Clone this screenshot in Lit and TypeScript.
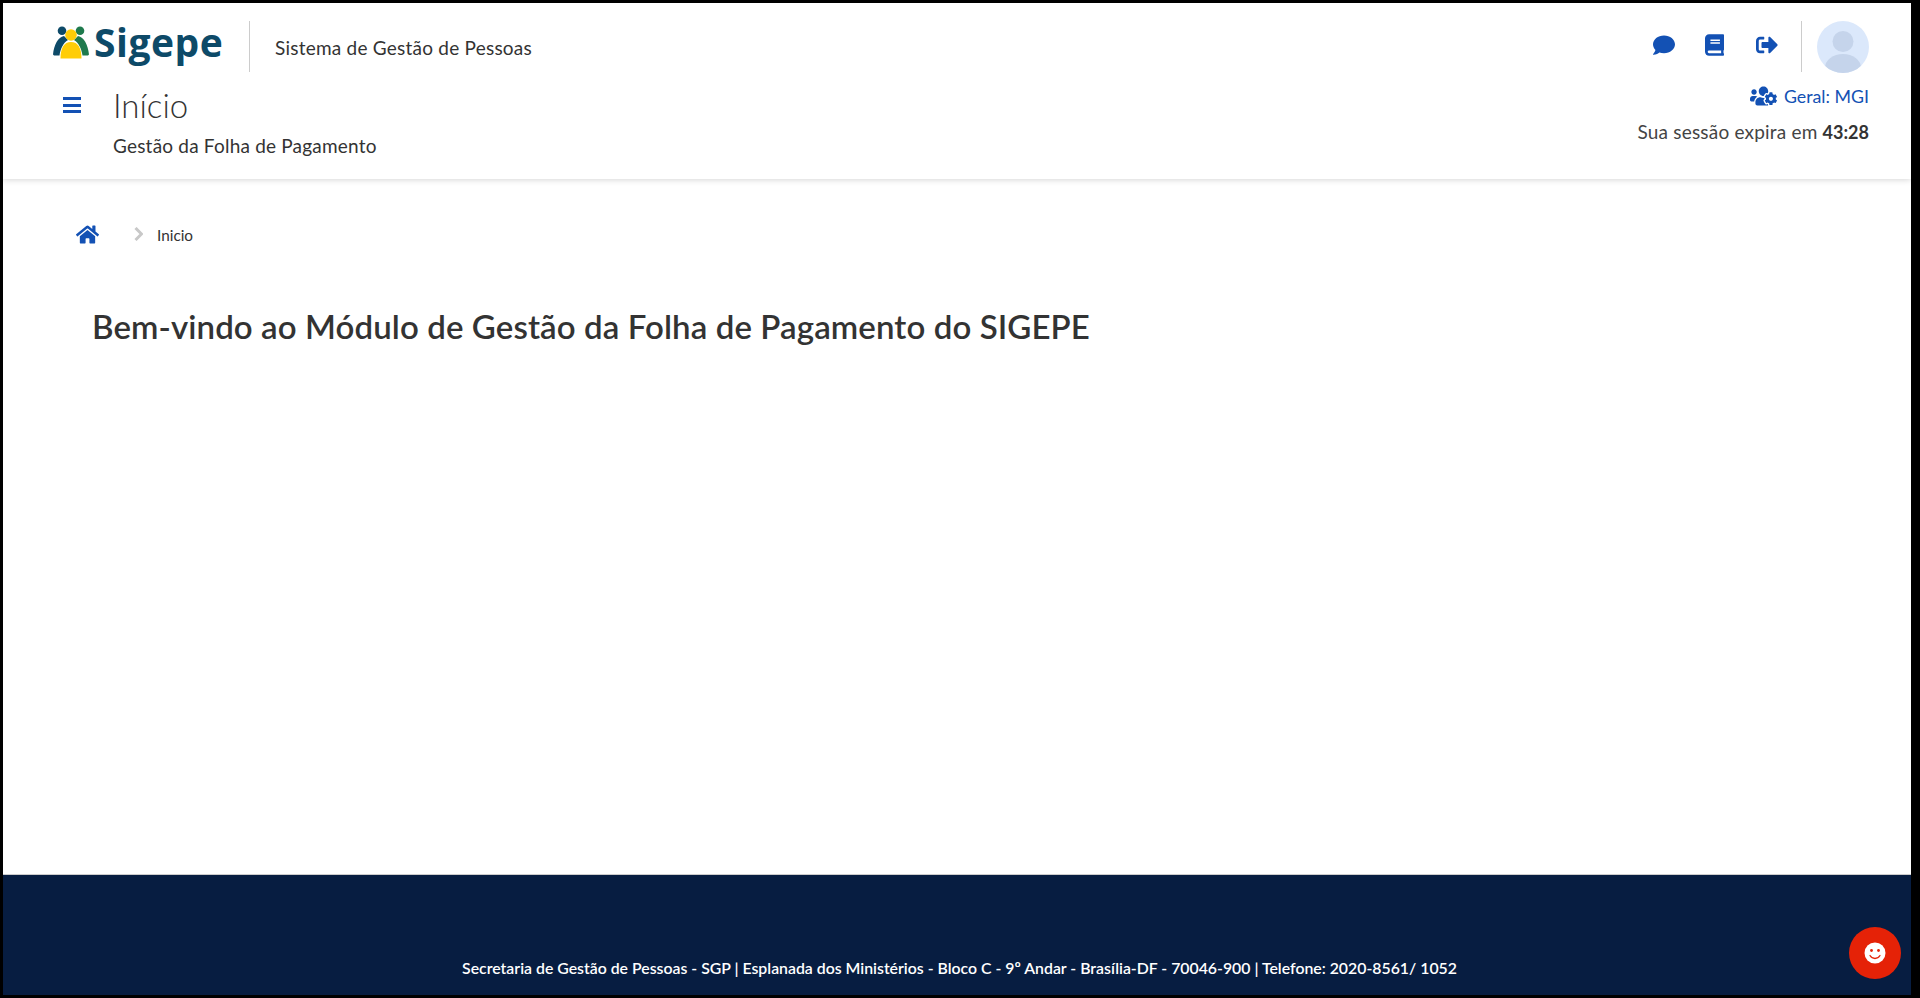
import { LitElement, html, css, svg } from "lit";
import { customElement } from "lit/decorators.js";

const ICON = {
  comment: svg`<path d="M256 32C114.6 32 0 125.1 0 240c0 49.6 21.4 95 57 130.7C44.5 421.1 2.7 466 2.2 466.5c-2.2 2.3-2.8 5.7-1.5 8.7S4.8 480 8 480c66.3 0 116-31.8 140.6-51.4 32.7 12.3 69 19.4 107.4 19.4 141.4 0 256-93.1 256-208S397.4 32 256 32z"/>`,
  book: svg`<path d="M448 360V24c0-13.3-10.7-24-24-24H96C43 0 0 43 0 96v320c0 53 43 96 96 96h328c13.3 0 24-10.7 24-24v-16c0-7.5-3.5-14.3-8.9-18.7-4.2-15.4-4.2-59.3 0-74.7 5.4-4.3 8.9-11.1 8.9-18.6zM128 134c0-3.3 2.7-6 6-6h212c3.3 0 6 2.7 6 6v20c0 3.3-2.7 6-6 6H134c-3.3 0-6-2.7-6-6v-20zm0 64c0-3.3 2.7-6 6-6h212c3.3 0 6 2.7 6 6v20c0 3.3-2.7 6-6 6H134c-3.3 0-6-2.7-6-6v-20zm253.4 250H96c-17.7 0-32-14.3-32-32 0-17.6 14.4-32 32-32h285.4c-1.9 17.1-1.9 46.9 0 64z"/>`,
  signout: svg`<path d="M497 273L329 441c-15 15-41 4.5-41-17v-96H152c-13.3 0-24-10.7-24-24v-96c0-13.3 10.7-24 24-24h136V88c0-21.4 25.9-32 41-17l168 168c9.3 9.4 9.3 24.6 0 34zM192 436v-40c0-6.6-5.4-12-12-12H96c-17.7 0-32-14.3-32-32V160c0-17.7 14.3-32 32-32h84c6.6 0 12-5.4 12-12V76c0-6.6-5.4-12-12-12H96c-53 0-96 43-96 96v192c0 53 43 96 96 96h84c6.6 0 12-5.4 12-12z"/>`,
  home: svg`<path d="M280.37 148.26L96 300.11V464a16 16 0 0 0 16 16l112.06-.29a16 16 0 0 0 15.92-16V368a16 16 0 0 1 16-16h64a16 16 0 0 1 16 16v95.64a16 16 0 0 0 16 16.05L464 480a16 16 0 0 0 16-16V300L295.67 148.26a12.19 12.19 0 0 0-15.3 0zM571.6 251.47L488 182.56V44.05a12 12 0 0 0-12-12h-56a12 12 0 0 0-12 12v72.61L318.47 43a48 48 0 0 0-61 0L4.34 251.47a12 12 0 0 0-1.6 16.9l25.5 31A12 12 0 0 0 45.15 301l235.22-193.74a12.19 12.19 0 0 1 15.3 0L530.9 301a12 12 0 0 0 16.9-1.6l25.5-31a12 12 0 0 0-1.7-16.93z"/>`,
  userscog: svg`<path d="M610.5 341.3c2.6-14.1 2.6-28.5 0-42.6l25.8-14.9c3-1.7 4.3-5.2 3.3-8.5-6.7-21.6-18.2-41.2-33.2-57.4-2.3-2.5-6-3.1-9-1.4l-25.8 14.9c-10.9-9.3-23.4-16.5-36.9-21.3v-29.8c0-3.4-2.4-6.4-5.7-7.1-22.3-5-45-4.8-66.2 0-3.3.7-5.7 3.7-5.7 7.1v29.8c-13.5 4.8-26 12-36.9 21.3l-25.8-14.9c-2.9-1.7-6.7-1.1-9 1.4-15 16.2-26.5 35.8-33.2 57.4-1 3.3.4 6.8 3.3 8.5l25.8 14.9c-2.6 14.1-2.6 28.5 0 42.6l-25.8 14.9c-3 1.7-4.3 5.2-3.3 8.5 6.7 21.6 18.2 41.1 33.2 57.4 2.3 2.5 6 3.1 9 1.4l25.8-14.9c10.9 9.3 23.4 16.5 36.9 21.3v29.8c0 3.4 2.4 6.4 5.7 7.1 22.3 5 45 4.8 66.2 0 3.3-.7 5.7-3.7 5.7-7.1v-29.8c13.5-4.8 26-12 36.9-21.3l25.8 14.9c2.9 1.7 6.7 1.1 9-1.4 15-16.2 26.5-35.8 33.2-57.4 1-3.3-.4-6.8-3.3-8.5l-25.8-14.9zM496 368.5c-26.8 0-48.5-21.8-48.5-48.5s21.8-48.5 48.5-48.5 48.5 21.8 48.5 48.5-21.7 48.5-48.5 48.5zM96 224c35.3 0 64-28.7 64-64s-28.7-64-64-64-64 28.7-64 64 28.7 64 64 64zm224 32c1.9 0 3.7-.5 5.6-.6 8.3-21.7 20.5-42.1 36.3-59.2 7.4-8 17.9-12.6 28.9-12.6 6.9 0 13.7 1.8 19.6 5.3l7.9 4.6c.8-.5 1.6-.9 2.4-1.4 7-14.6 11.2-30.8 11.2-48 0-61.9-50.1-112-112-112S208 82.1 208 144c0 61.9 50.1 112 112 112zm105.2 194.5c-2.3-1.2-4.6-2.6-6.8-3.9-8.2 4.8-15.3 9.8-27.5 9.8-10.9 0-21.4-4.6-28.9-12.6-18.3-19.8-32.3-43.9-40.2-69.6-10.7-34.5 24.9-49.7 25.8-50.3-.1-2.6-.1-5.2 0-7.8l-7.9-4.6c-3.8-2.2-7-5-9.8-8.1-3.3.2-6.5.6-9.8.6-24.6 0-47.6-6-68.5-16h-8.3C179.6 288 128 339.6 128 403.2V432c0 26.5 21.5 48 48 48h255.4c-3.7-6-6.2-12.8-6.2-20.3v-9.2zM173.1 274.6C161.5 263.1 145.6 256 128 256H64c-35.3 0-64 28.7-64 64v32c0 17.7 14.3 32 32 32h65.9c6.3-47.4 34.9-87.3 75.2-109.4z"/>`,
};

@customElement("app-root")
export class AppRoot extends LitElement {
  static styles = css`
    :host {
      display: block;
      box-sizing: border-box;
      height: 998px;
      background: #000;
      padding: 3px 9px 3px 3px;
      font-family: "Lato", "Open Sans", sans-serif;
      color: #333;
    }
    .page {
      position: relative;
      height: 100%;
      display: flex;
      flex-direction: column;
      background: #fff;
    }
    header {
      height: 176px;
      flex: none;
      display: flex;
      justify-content: space-between;
      box-shadow: 0 1px 6px rgba(0, 0, 0, 0.16);
      padding: 18px 42px 0 46px;
      box-sizing: border-box;
    }
    .brand {
      display: flex;
      align-items: center;
      height: 51px;
    }
    .logo {
      display: flex;
      align-items: center;
      width: 200px;
      flex: none;
      padding-left: 4px;
      box-sizing: border-box;
    }
    .logo svg {
      width: 36px;
      height: 33px;
      flex: none;
      position: relative;
      top: -4px;
    }
    .logo span {
      font-family: "Open Sans", sans-serif;
      font-weight: 700;
      font-size: 39px;
      line-height: 42px;
      color: #0d4a68;
      margin-left: 5px;
      position: relative;
      top: -5px;
      letter-spacing: 0.5px;
    }
    .rule {
      width: 1px;
      height: 51px;
      background: #ccc;
      flex: none;
    }
    .system {
      margin-left: 25px;
      font-size: 19px;
      letter-spacing: 0.23px;
      line-height: 24px;
      margin-top: 2px;
      color: #333;
    }
    .title {
      display: flex;
      margin-top: 11px;
    }
    .burger {
      width: 18px;
      margin: 14px 0 0 14px;
      height: 16px;
      display: flex;
      flex-direction: column;
      justify-content: space-between;
    }
    .burger i {
      display: block;
      height: 3px;
      background: #1351b4;
    }
    .heads {
      margin-left: 32px;
    }
    h1 {
      margin: 0;
      font-weight: 300;
      font-size: 33px;
      line-height: 44px;
      color: #333;
    }
    .heads p {
      margin: 7px 0 0;
      font-size: 19px;
      letter-spacing: 0.2px;
      line-height: 24px;
    }
    .right {
      display: flex;
      flex-direction: column;
      align-items: flex-end;
    }
    .tools {
      display: flex;
      align-items: center;
      height: 51px;
    }
    .tools .ic {
      fill: #1351b4;
      display: block;
      height: 22px;
      margin-bottom: 3px;
    }
    .t1 { width: 22px; margin-right: 30px; }
    .t2 { width: 19px; margin-right: 32px; }
    .t3 { width: 22px; margin-right: 23px; }
    .avatar {
      width: 52px;
      height: 52px;
      margin-left: 15px;
      flex: none;
      display: block;
    }
    .profile {
      display: flex;
      align-items: center;
      margin-top: 12px;
      color: #1351b4;
      font-size: 17.8px;
      line-height: 24px;
    }
    .profile svg {
      width: 27px;
      height: 22px;
      fill: #1351b4;
      margin-right: 7px;
    }
    .session {
      margin: 12px 0 0;
      font-size: 19px;
      letter-spacing: 0.2px;
      line-height: 24px;
      color: #444;
    }
    .session b {
      color: #333;
      font-weight: 700;
      font-size: 18px;
      letter-spacing: 0;
    }
    main {
      flex: 1;
      padding: 42px 0 0 73px;
    }
    .crumbs {
      display: flex;
      align-items: center;
      height: 26px;
    }
    .crumbs .home {
      width: 23px;
      height: 21px;
      fill: #1351b4;
      display: block;
    }
    .crumbs .chev {
      width: 9px;
      height: 14px;
      margin: 0 14px 0 35px;
      fill: none;
      stroke: #c8c8c8;
      stroke-width: 3;
      display: block;
    }
    .crumbs span {
      font-size: 15.3px;
      line-height: 20px;
      color: #333;
      position: relative;
      top: 1px;
    }
    h2 {
      margin: 57px 0 0 16px;
      font-weight: 600;
      font-size: 33px;
      letter-spacing: 0.1px;
      line-height: 44px;
      color: #333;
    }
    footer {
      height: 121px;
      flex: none;
      box-sizing: border-box;
      background: #071d41;
      border-top: 1px solid #ccc;
      padding: 82px 0 0 5px;
      text-align: center;
      color: #fff;
      font-size: 15.84px;
      line-height: 22px;
      font-weight: 600;
    }
    .fab {
      position: absolute;
      right: 10px;
      bottom: 16px;
      width: 52px;
      height: 52px;
      border-radius: 50%;
      background: #e52207;
      display: flex;
      align-items: center;
      justify-content: center;
    }
    .fab svg {
      width: 22px;
      height: 22px;
      display: block;
    }
  `;

  render() {
    return html`
      <div class="page">
        <header>
          <div class="left">
            <div class="brand">
              <div class="logo">
                <svg viewBox="0 0 36 33" aria-hidden="true">
                  <circle cx="9" cy="4.7" r="4.3" fill="#0d4a68" />
                  <circle cx="27" cy="4.7" r="4.3" fill="#1f7a4d" />
                  <path d="M0 28.5C1 19 5 11 11 10L15 14C10 17 7.5 23 6.5 29.5L1 29.5Z" fill="#0d4a68" />
                  <path d="M36 28.5C35 19 31 11 25 10L21 14C26 17 28.5 23 29.5 29.5L35 29.5Z" fill="#1f7a4d" />
                  <circle cx="18" cy="9" r="5.8" fill="#ffcd07" />
                  <path d="M7.5 32.5C7.5 22 11 16 18 16S28.500 22 28.500 32.500Z" fill="#ffcd07" />
                </svg>
                <span>Sigepe</span>
              </div>
              <div class="rule"></div>
              <div class="system">Sistema de Gestão de Pessoas</div>
            </div>
            <div class="title">
              <div class="burger"><i></i><i></i><i></i></div>
              <div class="heads">
                <h1>Início</h1>
                <p>Gestão da Folha de Pagamento</p>
              </div>
            </div>
          </div>
          <div class="right">
            <div class="tools">
              <svg class="ic t1" viewBox="0 0 512 512">${ICON.comment}</svg>
              <svg class="ic t2" viewBox="0 0 448 512">${ICON.book}</svg>
              <svg class="ic t3" viewBox="0 0 512 512">${ICON.signout}</svg>
              <div class="rule"></div>
              <svg class="avatar" viewBox="0 0 52 52">
                <defs><clipPath id="av"><circle cx="26" cy="26" r="26" /></clipPath></defs>
                <circle cx="26" cy="26" r="26" fill="#dbe8fb" />
                <g clip-path="url(#av)" fill="#c5d4eb">
                  <circle cx="26" cy="20.5" r="10.5" />
                  <ellipse cx="26" cy="47" rx="18" ry="14" />
                </g>
              </svg>
            </div>
            <div class="profile">
              <svg viewBox="0 0 640 512">${ICON.userscog}</svg>
              <span>Geral: MGI</span>
            </div>
            <p class="session">Sua sessão expira em <b>43:28</b></p>
          </div>
        </header>
        <main>
          <nav class="crumbs">
            <svg class="home" viewBox="0 0 576 512">${ICON.home}</svg>
            <svg class="chev" viewBox="0 0 9 14"><path d="M1.5 1l6 6-6 6" /></svg>
            <span>Inicio</span>
          </nav>
          <h2>Bem-vindo ao Módulo de Gestão da Folha de Pagamento do SIGEPE</h2>
        </main>
        <footer>Secretaria de Gestão de Pessoas - SGP | Esplanada dos Ministérios - Bloco C - 9º Andar - Brasília-DF - 70046-900 | Telefone: 2020-8561/ 1052</footer>
        <div class="fab">
          <svg viewBox="0 0 22 22">
            <circle cx="11" cy="11" r="10.5" fill="#fff" />
            <circle cx="7.5" cy="8.5" r="1.4" fill="#e52207" />
            <circle cx="14.5" cy="8.5" r="1.4" fill="#e52207" />
            <path d="M6 13.5c1.2 2 3 3 5 3s3.800-1 5-3" fill="none" stroke="#e52207" stroke-width="1.3" stroke-linecap="round" />
          </svg>
        </div>
      </div>
    `;
  }
}
